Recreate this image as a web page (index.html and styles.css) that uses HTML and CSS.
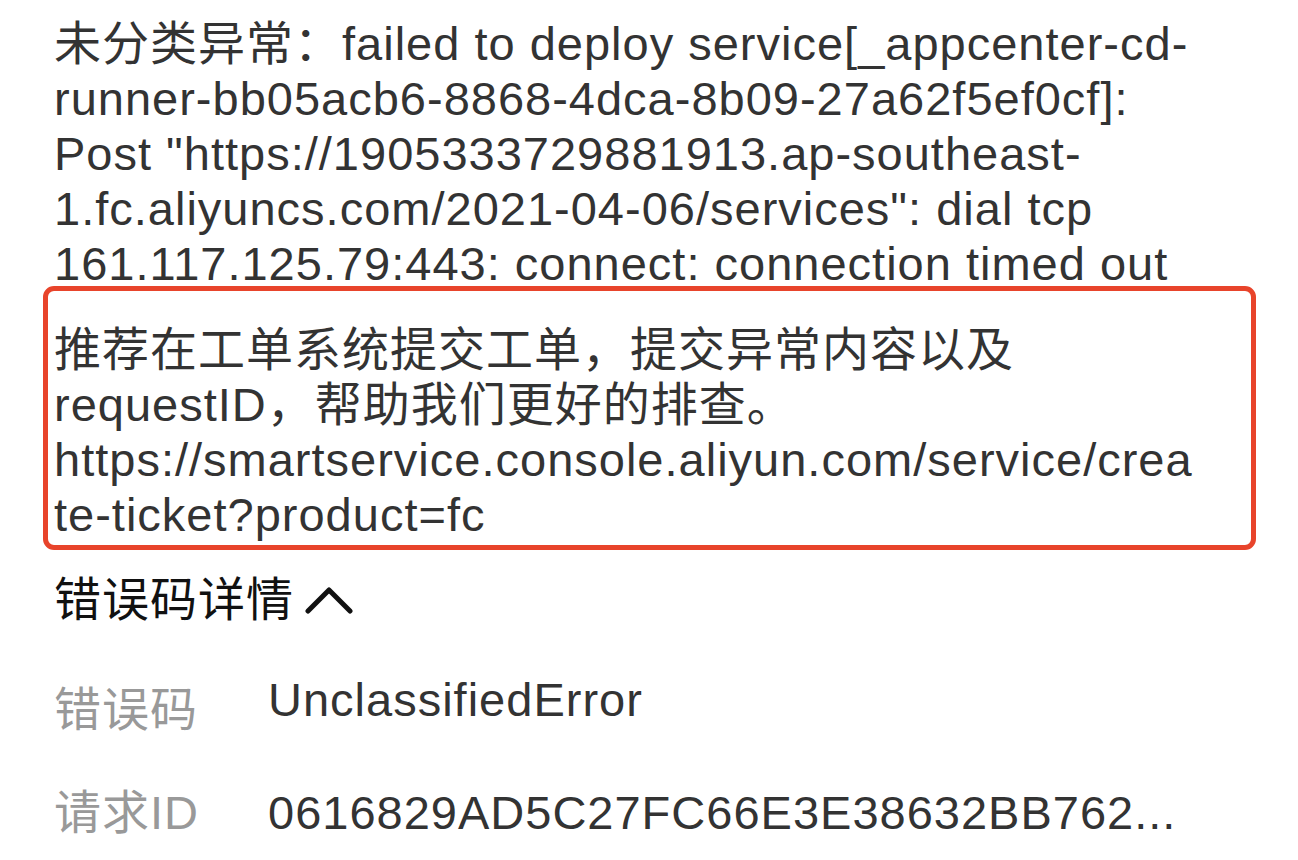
FILE: index.html
```html
<!DOCTYPE html>
<html lang="zh-CN">
<head>
<meta charset="UTF-8" />
<meta name="viewport" content="width=device-width, initial-scale=1" />
<title>错误详情</title>
<link rel="stylesheet" href="styles.css">
</head>
<body>

<div class="error-panel">
  <!-- 错误信息 -->
  <p class="error-msg">未分类异常：failed to deploy service[_appcenter-cd-runner-bb05acb6-8868-4dca-8b09-27a62f5ef0cf]: Post "https://1905333729881913.ap-southeast-1.fc.aliyuncs.com/2021-04-06/services": dial tcp 161.117.125.79:443: connect: connection timed out</p>

  <!-- 提示框 -->
  <div class="error-tip">推荐在工单系统提交工单，提交异常内容以及 requestID，帮助我们更好的排查。https://smartservice.console.aliyun.com/service/create-ticket?product=fc</div>

  <div class="details-toggle">
    <span>错误码详情</span>
    <svg class="chevron" width="48" height="30" viewBox="0 0 48 30">
      <polyline points="3,26 24,5 45,26" fill="none" stroke="#111" stroke-width="5" stroke-linecap="round" stroke-linejoin="round" />
    </svg>
  </div>

  <div class="details-list">
    <div class="detail-row first">
      <div class="detail-label">错误码</div>
      <div class="detail-value">UnclassifiedError</div>
    </div>
    <div class="detail-row">
      <div class="detail-label">请求ID</div>
      <div class="detail-value">0616829AD5C27FC66E3E38632BB762...</div>
    </div>
  </div>
</div>

</body>
</html>
```

FILE: styles.css
```css
body {
  margin: 0;
  background: #fff;
  font-family: "Liberation Sans", "Noto Sans CJK SC", sans-serif;
  font-size: 47px;
  letter-spacing: 1px;
  color: #333;
}
.error-panel {
  padding: 16px 68px 0 54px;
}
.error-msg {
  margin: 0;
  line-height: 55px;
  overflow-wrap: break-word;
}
/* 红框提示 */
.error-tip {
  margin: -5px -26px 0 -11px;
  padding: 31px 50px 3px 6px;
  border: 5px solid #e8442b;
  border-radius: 11px;
  line-height: 55px;
  overflow-wrap: break-word;
}
.details-toggle {
  display: flex;
  align-items: center;
  gap: 11px;
  margin-top: 22px;
  line-height: 55px;
  color: #111;
}
.chevron {
  display: block;
}
.details-list {
  margin-top: 16px;
}
.detail-row {
  display: flex;
  align-items: flex-start;
  padding: 29px 0;
  line-height: 55px;
}
.detail-label {
  flex: none;
  width: 214px;
  color: #999;
}
.detail-row.first .detail-label {
  margin: 10px 0 -10px;
}
.detail-value {
  color: #333;
  white-space: nowrap;
}
```
